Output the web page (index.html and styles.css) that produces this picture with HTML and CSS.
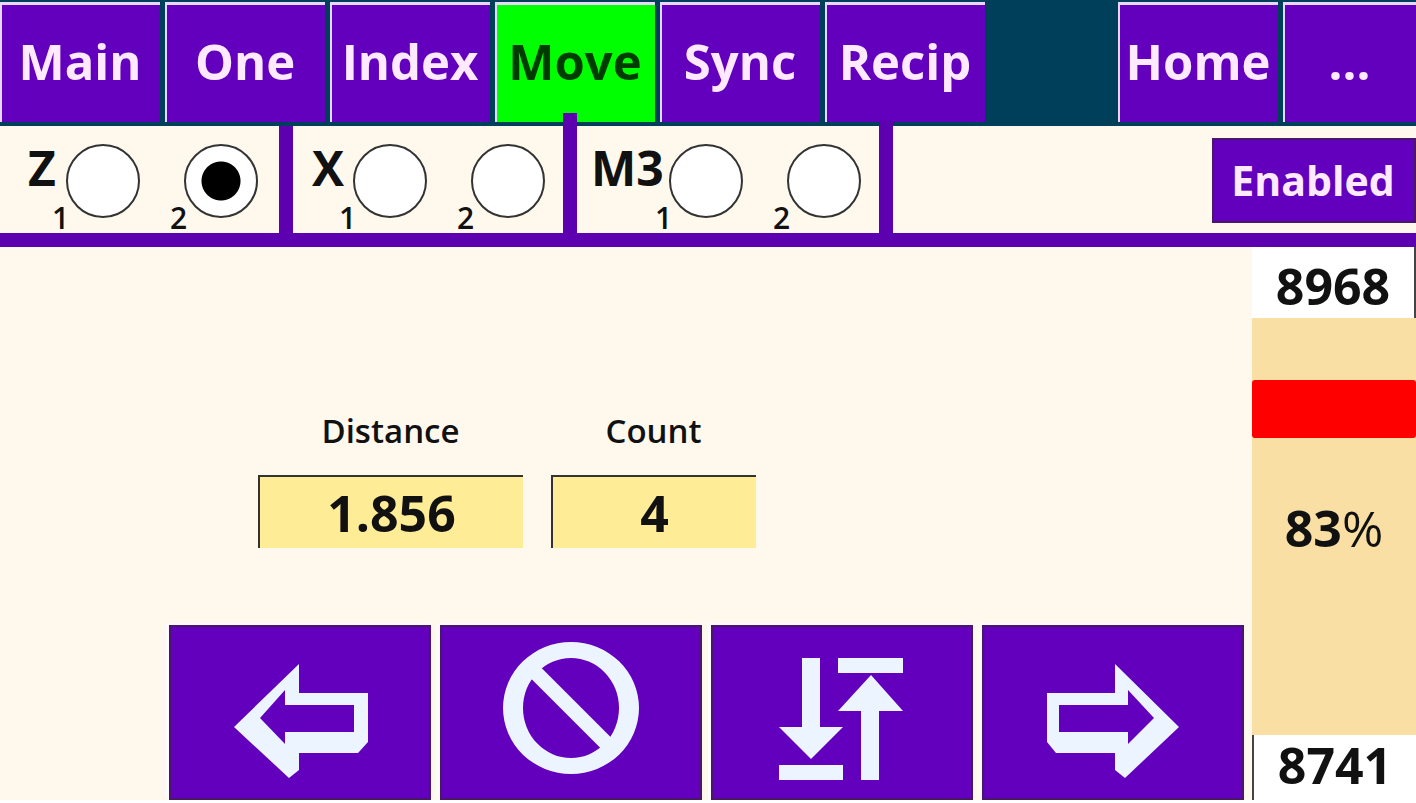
FILE: index.html
```html
<!DOCTYPE html>
<html lang="en">
<head>
<meta charset="utf-8">
<meta name="viewport" content="width=device-width, initial-scale=1">
<title>Move</title>
<link rel="stylesheet" href="styles.css">
</head>
<body>
<div class="panel">
  <nav class="tabs" aria-label="Screens">
    <button class="tab" type="button">Main</button>
    <button class="tab" type="button">One</button>
    <button class="tab" type="button">Index</button>
    <button class="tab tab-active" type="button" aria-current="page">Move</button>
    <button class="tab" type="button">Sync</button>
    <button class="tab" type="button">Recip</button>
    <span class="tab-space"></span>
    <button class="tab" type="button">Home</button>
    <button class="tab" type="button">...</button>
  </nav>

  <div class="axes">
    <div class="axis axis-z" role="radiogroup" aria-labelledby="name-z">
      <span class="axis-name" id="name-z">Z</span>
      <label class="axis-num num-first" for="z1">1</label>
      <input class="axis-radio radio-first" type="radio" name="z" id="z1">
      <label class="axis-num num-second" for="z2">2</label>
      <input class="axis-radio radio-second" type="radio" name="z" id="z2" checked>
    </div>
    <div class="axis axis-x" role="radiogroup" aria-labelledby="name-x">
      <span class="axis-name" id="name-x">X</span>
      <label class="axis-num num-first" for="x1">1</label>
      <input class="axis-radio radio-first" type="radio" name="x" id="x1">
      <label class="axis-num num-second" for="x2">2</label>
      <input class="axis-radio radio-second" type="radio" name="x" id="x2">
    </div>
    <div class="axis axis-m3" role="radiogroup" aria-labelledby="name-m3">
      <span class="axis-name" id="name-m3">M3</span>
      <label class="axis-num num-first" for="m1">1</label>
      <input class="axis-radio radio-first" type="radio" name="m3" id="m1">
      <label class="axis-num num-second" for="m2">2</label>
      <input class="axis-radio radio-second" type="radio" name="m3" id="m2">
    </div>
    <div class="status">
      <button class="enabled" type="button">Enabled</button>
    </div>
  </div>

  <div class="body">
    <main class="work">
      <div class="fields">
        <div class="field">
          <label for="distance">Distance</label>
          <input id="distance" type="text" value="1.856">
        </div>
        <div class="field">
          <label for="count">Count</label>
          <input id="count" type="text" value="4">
        </div>
      </div>
      <div class="actions">
        <button class="action" type="button" aria-label="Move left">
          <svg viewBox="0 0 258 171" aria-hidden="true">
            <path fill-rule="evenodd" d="M63 100 128 37V66H197V115L187 126H128V143L118 151ZM89 91 114 117V105H183V78H114V63Z"/>
          </svg>
        </button>
        <button class="action" type="button" aria-label="Stop">
          <svg viewBox="0 0 258 171" aria-hidden="true">
            <path fill-rule="evenodd" d="M61 81A68 66 0 0 1 197 81A68 66 0 0 1 61 81ZM81 81A48 50 0 0 0 177 81A48 50 0 0 0 81 81Z"/>
            <path class="slash" d="M94 46 165 117"/>
          </svg>
        </button>
        <button class="action" type="button" aria-label="Move between limits">
          <svg viewBox="0 0 258 171" aria-hidden="true">
            <path d="M89 31H107V100H130L98 132 66 100H89ZM66 138H130V153H66ZM125 31H190V46H125ZM158 48 190 84H166V153H148V84H125Z"/>
          </svg>
        </button>
        <button class="action" type="button" aria-label="Move right">
          <svg viewBox="0 0 258 171" aria-hidden="true">
            <path fill-rule="evenodd" d="M195 100 131 37V66H63V115L72 126H131V143L141 151ZM170 91 144 117V105H75V78H144V63Z"/>
          </svg>
        </button>
      </div>
    </main>
    <aside class="gauge" aria-label="Position">
      <output class="limit limit-top">8968</output>
      <div class="track">
        <div class="marker"></div>
        <output class="percent">83<span>%</span></output>
      </div>
      <output class="limit limit-bottom">8741</output>
    </aside>
  </div>
</div>
</body>
</html>
```
FILE: styles.css
```css
* {
  box-sizing: border-box;
}

:root {
  --purple: #6200bd;
  --purple-line: #5c00b0;
  --edge: #4a1668;
  --teal: #003f5a;
  --cream: #fff9ed;
  --ink: #111;
}

body {
  margin: 0;
  background: #fff;
  color: var(--ink);
  font-family: "Open Sans", "Noto Sans", sans-serif;
  font-weight: 700;
}

button,
input {
  font: inherit;
  border-radius: 0;
  margin: 0;
}

.panel {
  display: flex;
  flex-direction: column;
  min-height: 100vh;
  padding-bottom: 3px;
}

.tabs {
  display: grid;
  grid-template-columns: repeat(6, 160fr) 123fr 160fr 133fr;
  gap: 5px;
  padding: 2px 0 4px;
  background: var(--teal);
}

.tab {
  min-width: 0;
  height: 120px;
  padding: 0 2px 6px 0;
  border: 0 solid #e8d8ff;
  border-width: 3px 0 0 2px;
  background: var(--purple);
  color: #ffe9ff;
  font-size: 49px;
  line-height: 64px;
}

.tab-active {
  background: #00ff00;
  color: #003c00;
}

.axes {
  display: grid;
  grid-template-columns: 279fr 270fr 302fr 523fr;
  column-gap: 14px;
  border-bottom: 14px solid var(--purple-line);
  background: var(--purple-line);
}

.axis,
.status {
  position: relative;
  min-height: 107px;
  background: var(--cream);
}

/* The separators run up over the tab bar. */
.axis-x::after,
.axis-m3::after {
  content: "";
  position: absolute;
  top: -13px;
  right: -14px;
  width: 14px;
  height: 13px;
  background: var(--purple-line);
}

.axis-m3::after {
  top: -6px;
  height: 6px;
}

.axis {
  display: grid;
  grid-template-columns: var(--name-width) 14px 74px 30px 14px 74px;
  grid-template-rows: 74px 15px;
  padding-top: 18px;
}

.axis-z {
  --name-width: 24px;
  padding-left: 28px;
}

.axis-x {
  --name-width: 27px;
  padding-left: 19px;
}

.axis-m3 {
  --name-width: 64px;
  padding-left: 14px;
}

.axis-name {
  grid-area: 1 / 1 / 2 / 3;
  font-size: 48px;
  line-height: 48px;
  white-space: nowrap;
}

.axis-num {
  grid-row: 1 / 3;
  align-self: end;
  font-size: 30px;
  font-weight: 600;
  line-height: 30px;
}

.num-first {
  grid-column: 2;
}

.num-second {
  grid-column: 5;
}

.axis-radio {
  appearance: none;
  grid-row: 1;
  width: 74px;
  height: 74px;
  border: 2px solid #333;
  border-radius: 50%;
  background: #fff;
}

.radio-first {
  grid-column: 3;
}

.radio-second {
  grid-column: 6;
}

.axis-radio:checked {
  background: radial-gradient(circle, #000 19px, #fff 20px);
}

.status {
  display: flex;
  justify-content: flex-end;
  align-items: flex-start;
  padding-top: 12px;
}

.enabled {
  width: 204px;
  height: 85px;
  padding: 0 2px 2px 0;
  border: 2px solid var(--edge);
  background: var(--purple);
  color: #ffe9ff;
  font-size: 41px;
  line-height: 56px;
}

.body {
  display: grid;
  grid-template-columns: 1252fr 164fr;
  flex: 1;
}

.work {
  display: flex;
  flex-direction: column;
  justify-content: space-between;
  background: var(--cream);
}

.fields {
  display: grid;
  grid-template-columns: 265fr 205fr;
  column-gap: 28px;
  margin: 160px 496px 0 258px;
}

.field {
  display: flex;
  flex-direction: column;
  gap: 20px;
}

.field label {
  font-size: 33px;
  font-weight: 600;
  line-height: 48px;
  text-align: center;
}

.field input {
  width: 100%;
  height: 73px;
  padding: 0;
  border: 0 solid #333;
  border-width: 2px 0 0 2px;
  background: #ffec96;
  color: var(--ink);
  font-size: 50px;
  text-align: center;
}

.actions {
  display: grid;
  grid-template-columns: repeat(4, 1fr);
  gap: 9px;
  padding: 0 8px 0 169px;
}

.action {
  min-width: 0;
  height: 175px;
  padding: 0;
  border: 2px solid var(--edge);
  background: var(--purple);
  box-shadow: -3px -2px 0 #fffaff;
}

.action svg {
  display: block;
  width: 100%;
  fill: #ecf5ff;
}

.action .slash {
  fill: none;
  stroke: #ecf5ff;
  stroke-width: 15;
}

.gauge {
  display: flex;
  flex-direction: column;
  font-size: 50px;
  text-align: center;
}

.limit {
  background: #fff;
}

.limit-top {
  height: 71px;
  border: 0 solid #444;
  border-right-width: 2px;
  line-height: 79px;
}

.limit-bottom {
  height: 65px;
  border: 0 solid #444;
  border-left-width: 2px;
  line-height: 61px;
}

.track {
  flex: 1;
  padding-top: 62px;
  background: #fadfa5;
}

.marker {
  height: 58px;
  border-radius: 3px;
  background: #f00;
}

.percent {
  display: block;
  margin-top: 56px;
  line-height: 68px;
}

.percent span {
  font-weight: 400;
}
```
